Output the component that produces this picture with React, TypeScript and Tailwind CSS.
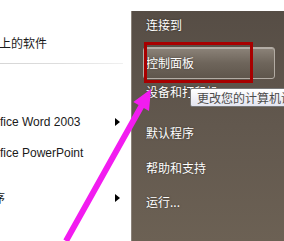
import React from "react";

const Tri = () => (
  <span className="inline-block w-0 h-0 border-y-[4px] border-y-transparent border-l-[5px] border-l-black" />
);

export default function App() {
  const cjk = { fontFamily: '"Noto Sans CJK SC", "Noto Sans", sans-serif' };
  return (
    <div className="relative w-[284px] h-[241px] overflow-hidden bg-white flex">
      {/* Left white panel */}
      <div className="w-[131px] shrink-0 flex flex-col text-[12px] text-[#1a1a1a]" style={{ fontFamily: '"Liberation Sans", "Noto Sans CJK SC", sans-serif' }}>
        <div className="h-[34px]" />
        <div className="h-[18px] leading-[18px] -ml-[1px]" style={cjk}>上的软件</div>
        <div className="h-[11px]" />
        <div className="h-[1px] w-[123px] bg-gradient-to-r from-[#d6d6d6] via-[#dedede] to-[#f0f0f0]" />
        <div className="h-[50px]" />
        <div className="h-[16px] flex items-center justify-between pr-[11px]">
          <span className="leading-[16px]">fice Word 2003</span>
          <Tri />
        </div>
        <div className="h-[15px]" />
        <div className="h-[16px] flex items-center">
          <span className="leading-[16px]">fice PowerPoint</span>
        </div>
        <div className="h-[29px]" />
        <div className="h-[16px] flex items-center justify-between pr-[11px] overflow-hidden">
          <span className="leading-[16px] -ml-[7px]" style={cjk}>序</span>
          <Tri />
        </div>
      </div>

      {/* Right dark panel */}
      <div className="flex-1 mt-[11px] bg-gradient-to-b from-[#564d45] via-[#62584e] to-[#6c6154] border-l border-l-[#8b8279] flex flex-col text-[12px] text-white [text-shadow:0_0_2px_rgba(0,0,0,0.5)]" style={cjk}>
        <div className="h-[28px] flex items-center pl-[14px]">连接到</div>
        <div className="h-[8px]" />
        <div className="h-[32px] ml-[11px] w-[132px] rounded-[3px] border border-[#b3aca4] bg-gradient-to-b from-[#8c8379] via-[#6e655b] to-[#5f564c] flex items-center pl-[2px] shadow-[inset_0_1px_0_rgba(255,255,255,0.35)]">
          控制面板
        </div>
        <div className="h-[26px] flex items-center pl-[14px]">设备和打印机</div>
        <div className="h-[15px]" />
        <div className="h-[26px] flex items-center pl-[14px]">默认程序</div>
        <div className="h-[9px]" />
        <div className="h-[26px] flex items-center pl-[14px]">帮助和支持</div>
        <div className="h-[8px]" />
        <div className="h-[26px] flex items-center pl-[14px]">运行...</div>
      </div>

      {/* Red highlight rectangle */}
      <div className="absolute left-[144px] top-[42px] w-[109px] h-[41px] border-[3px] border-[#a80000]" />

      {/* Tooltip */}
      <div
        className="absolute left-[190px] top-[88px] h-[19px] pl-[6px] pr-[6px] whitespace-nowrap border border-[#767676] rounded-[2px] bg-gradient-to-b from-[#ffffff] to-[#e4e5f0] text-[12px] leading-[17px] text-[#4c4c4c]"
        style={cjk}
      >
        更改您的计算机设置
      </div>

      {/* Magenta arrow */}
      <svg className="absolute left-0 top-0" width="284" height="241" viewBox="0 0 284 241">
        <polygon
          points="151,89 149,111 143.8,108 68.6,242.5 63.4,239.5 138.6,105 133.3,102"
          fill="#f21cf0"
        />
      </svg>
    </div>
  );
}
